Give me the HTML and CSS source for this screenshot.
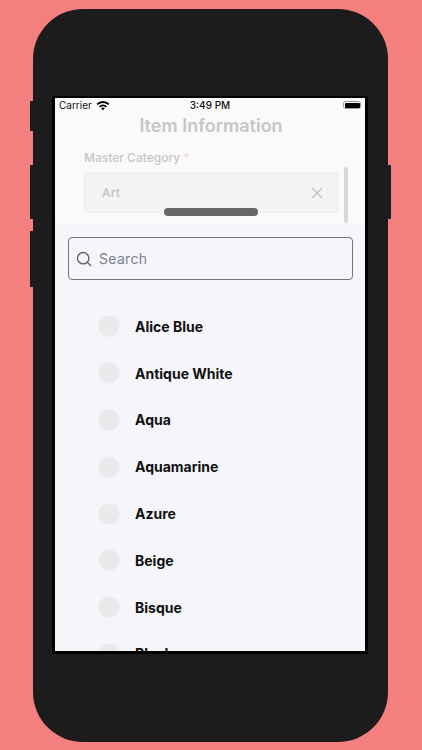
FILE: index.html
```html
<!DOCTYPE html>
<html lang="en">
<head>
    <meta charset="UTF-8">
    <meta name="viewport" content="width=device-width, initial-scale=1.0">
    <title>Item Information</title>
    <link rel="stylesheet" href="styles.css">
</head>
<body>
    <div class="phone">
        <span class="side-btn mute"></span>
        <span class="side-btn vol-up"></span>
        <span class="side-btn vol-down"></span>
        <span class="side-btn power"></span>
        <div class="screen">
            <div class="status-bar">
                <div class="carrier">
                    <span>Carrier</span>
                    <svg class="wifi" viewBox="0 0 16 12" width="14" height="10.5">
                        <path d="M0.6 4.2a10.6 10.6 0 0 1 14.8 0l-1.5 1.6a8.4 8.4 0 0 0-11.8 0z"/>
                        <path d="M3.4 7a6.6 6.6 0 0 1 9.2 0l-1.5 1.6a4.4 4.4 0 0 0-6.2 0z"/>
                        <path d="M6 9.6a2.9 2.9 0 0 1 4 0L8 11.7z"/>
                    </svg>
                </div>
                <div class="time">3:49 PM</div>
                <div class="battery"><span class="battery-fill"></span></div>
            </div>
            <div class="form">
                <h1>Item Information</h1>
                <div class="field-label">Master Category <span class="required">*</span></div>
                <div class="field">
                    <span>Art</span>
                    <svg class="clear" viewBox="0 0 12 12" width="12" height="12">
                        <path d="M1 1l10 10M11 1L1 11"/>
                    </svg>
                </div>
                <div class="scrollbar"></div>
            </div>
            <div class="handle"></div>
            <div class="sheet">
                <div class="search">
                    <svg class="search-icon" viewBox="0 0 16 16" width="16" height="16">
                        <circle cx="7.2" cy="7.2" r="5.7"/>
                        <path d="M11.4 11.4l3.6 3.6"/>
                    </svg>
                    <span>Search</span>
                </div>
                <div class="color-list">
                    <div class="color-row"><span class="radio"></span><span>Alice Blue</span></div>
                    <div class="color-row"><span class="radio"></span><span>Antique White</span></div>
                    <div class="color-row"><span class="radio"></span><span>Aqua</span></div>
                    <div class="color-row"><span class="radio"></span><span>Aquamarine</span></div>
                    <div class="color-row"><span class="radio"></span><span>Azure</span></div>
                    <div class="color-row"><span class="radio"></span><span>Beige</span></div>
                    <div class="color-row"><span class="radio"></span><span>Bisque</span></div>
                    <div class="color-row"><span class="radio"></span><span>Black</span></div>
                </div>
            </div>
        </div>
    </div>
</body>
</html>
```

FILE: styles.css
```css
html, body {
    height: 100%;
}
body {
    margin: 0;
    background-color: #f47f7f;
    font-family: Inter, "Open Sans", sans-serif;
    overflow: hidden;
    padding: 9px 34px 8px 33px;
    box-sizing: border-box;
}
.phone {
    position: relative;
    height: 733px;
    background-color: #1c1c1c;
    border-radius: 50px;
    padding-top: 87px;
    box-sizing: border-box;
}
.side-btn {
    position: absolute;
    width: 3px;
    background-color: #1c1c1c;
}
.mute { left: -3px; top: 92px; height: 30px; }
.vol-up { left: -3px; top: 156px; height: 54px; }
.vol-down { left: -3px; top: 222px; height: 56px; }
.power { right: -3px; top: 156px; height: 54px; }
.screen {
    position: relative;
    width: 310px;
    height: 553px;
    margin-left: 19px;
    border: solid #000;
    border-width: 2px 3px 3px 3px;
    overflow: hidden;
    background-color: #f5f5fa;
    display: flex;
    flex-direction: column;
}
.status-bar {
    height: 14px;
    padding: 0 4px;
    background-color: #fafafa;
    display: grid;
    grid-template-columns: 1fr auto 1fr;
    align-items: center;
    font-size: 10px;
    color: #111;
    flex-shrink: 0;
}
.carrier {
    display: flex;
    align-items: center;
    gap: 4px;
}
.wifi {
    fill: #000;
}
.time {
    font-weight: 500;
}
.battery {
    justify-self: end;
    width: 18px;
    height: 8px;
    border: 1px solid #999;
    border-radius: 2.5px;
    padding: 0.5px;
    box-sizing: border-box;
    display: flex;
}
.battery-fill {
    flex: 1;
    background-color: #000;
    border-radius: 1px;
}
.form {
    position: relative;
    height: 111px;
    flex-shrink: 0;
    background-color: #fafafa;
    box-sizing: border-box;
    padding: 0 27px 0 29px;
    color: #c6c6c6;
}
.form h1 {
    margin: 0;
    padding-top: 3px;
    font-size: 18px;
    line-height: 21px;
    font-weight: 600;
    text-align: center;
}
.field-label {
    margin-top: 14px;
    font-size: 12px;
    line-height: 16px;
    font-weight: 500;
}
.required {
    color: #f8d4d4;
}
.field {
    margin-top: 6px;
    height: 41px;
    box-sizing: border-box;
    background-color: #f4f4f4;
    border: 1px solid #eeeeee;
    border-radius: 3px;
    padding: 0 14px 0 17px;
    display: flex;
    align-items: center;
    justify-content: space-between;
    font-size: 12px;
    font-weight: 600;
}
.clear {
    fill: none;
    stroke: #bdbdbd;
    stroke-width: 1.1;
}
.scrollbar {
    position: absolute;
    top: 55px;
    right: 17px;
    width: 4px;
    height: 56px;
    border-radius: 2px;
    background-color: #d6d7da;
}
.handle {
    position: absolute;
    top: 110px;
    left: 109px;
    width: 94px;
    height: 8px;
    border-radius: 4px;
    background-color: #666;
}
.sheet {
    flex: 1;
    min-height: 0;
    background-color: #f5f5fa;
    padding: 14px 12px 0 13px;
}
.search {
    height: 43px;
    box-sizing: border-box;
    border: 1px solid #6f7480;
    border-radius: 4px;
    padding: 0 7px;
    display: flex;
    align-items: center;
    gap: 7px;
    font-size: 14px;
    letter-spacing: 0.3px;
    color: #7b8090;
}
.search-icon {
    fill: none;
    stroke: #5a5f68;
    stroke-width: 1.3;
}
.color-list {
    padding: 23px 0 0 30px;
}
.color-row {
    height: 46.8px;
    display: flex;
    align-items: center;
    gap: 15px;
    font-size: 14px;
    font-weight: 700;
    color: #111;
}
.radio {
    width: 22px;
    height: 22px;
    border-radius: 50%;
    background-color: #eaeaec;
    border: 1px solid #efeff1;
    box-sizing: border-box;
}
```
